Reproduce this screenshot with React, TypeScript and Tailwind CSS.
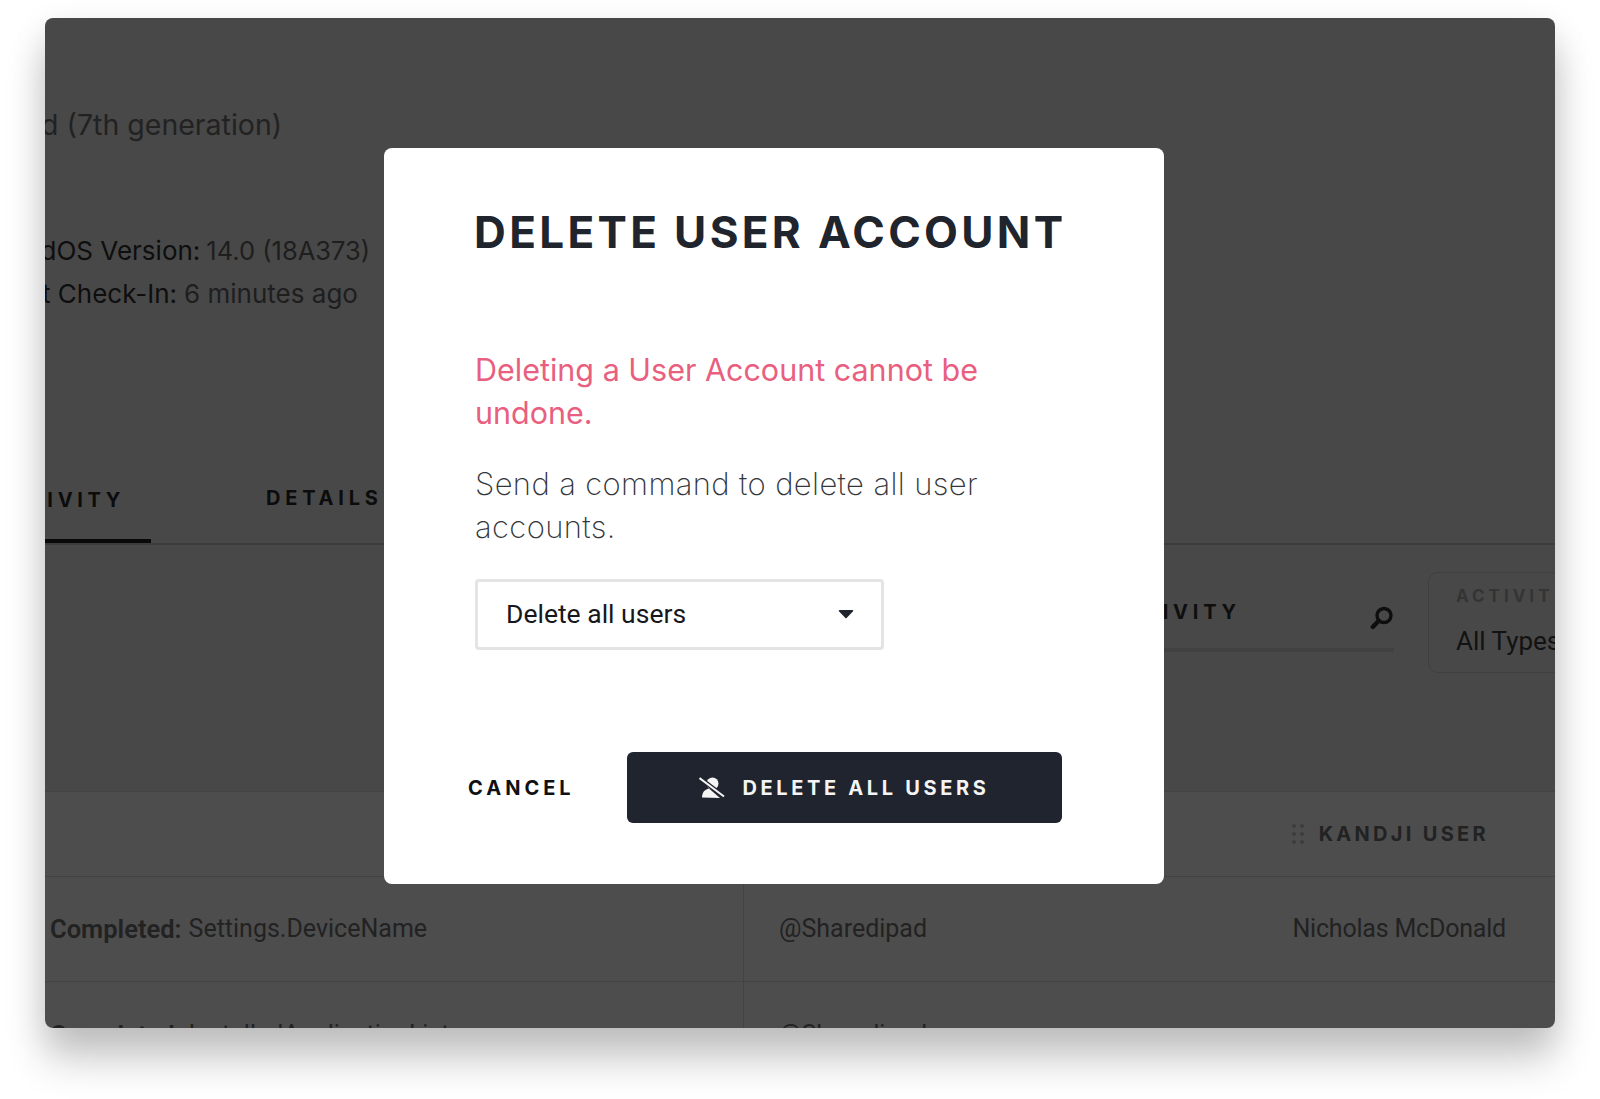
import React from "react";

const sans = "font-['Inter','Liberation_Sans',sans-serif]";
const narrow = "font-['Roboto','Liberation_Sans',sans-serif]";

function UserOff() {
  return (
    <svg width="26" height="21" viewBox="0 0 26 21" className="shrink-0">
      <circle cx="13.5" cy="6.5" r="6" fill="#f4f4f4" />
      <path d="M3 20.500c0-5 2.500-8 7-9l11 9.500z" fill="#f4f4f4" />
      <path d="M.5 1 25 19.500" stroke="#20242e" strokeWidth="4.500" fill="none" />
      <path d="M.5 1 25 19.500" stroke="#f4f4f4" strokeWidth="2" fill="none" />
    </svg>
  );
}

function SearchMark() {
  return (
    <svg width="24" height="24" viewBox="0 0 24 24" className="shrink-0">
      <circle cx="14" cy="9.500" r="7" stroke="#0e0e0e" strokeWidth="3.400" fill="none" />
      <path d="M8.500 15 2.800 21" stroke="#0e0e0e" strokeWidth="4.400" strokeLinecap="round" fill="none" />
    </svg>
  );
}

function Background() {
  return (
    <div className={`flex h-full flex-col ${sans}`}>
      <section className="relative h-[527px] shrink-0 border-b-[2px] border-[#3c3c3c] bg-[#484848]">
        <div className="ml-[-45px] pt-[86px] text-[28.5px] leading-[42px] text-[#222222]">iPad (7th generation)</div>
        <div className="ml-[-42px] mt-[83px] flex text-[26px] leading-[43px]">
          <span className="text-[#0e0e0e]">iPadOS Version:</span>
          <span className="ml-[6px] text-[25.5px] text-[#1e1e1e]">14.0 (18A373)</span>
        </div>
        <div className="ml-[-46px] flex text-[26px] leading-[43px]">
          <span className="text-[#0e0e0e]">Last Check-In:</span>
          <span className="ml-[7px] text-[#1e1e1e]">6 minutes ago</span>
        </div>
        <div className="absolute bottom-0 left-0 flex h-[68px] items-start">
          <div className="ml-[-54px] flex h-[68px] w-[160px] items-center justify-start border-b-[4px] border-[#090909] pb-[14px] text-[20px] font-bold tracking-[4.7px] text-[#0c0c0c]">
            ACTIVITY
          </div>
          <div className="ml-[115px] flex h-[46px] items-center text-[20px] font-bold tracking-[4.8px] text-[#0c0c0c]">DETAILS</div>
        </div>
      </section>

      <section className="flex h-[247px] shrink-0 justify-end border-b border-[#434343] bg-[#484848]">
        <div className="mt-[27px] flex h-[80px] w-[260px] items-start justify-between border-b-[4px] border-[#414141]">
          <span className="ml-[-28px] mt-[25px] text-[20px] font-bold tracking-[4.8px] text-[#0e0e0e]">ACTIVITY</span>
          <span className="mt-[34px]"><SearchMark /></span>
        </div>
        <div className="ml-[34px] mr-[-100px] mt-[27px] h-[101px] w-[227px] rounded-[10px] border border-[#3f3f3f] pl-[27px] pt-[12px]">
          <div className="text-[17px] font-bold leading-[22px] tracking-[4px] text-[#343434]">ACTIVITY</div>
          <div className={`mt-[17px] text-[26px] leading-[34px] text-[#121212] ${narrow}`}>All Types</div>
        </div>
      </section>

      <section className="flex-1 bg-[#4d4d4d]">
        <div className="flex h-[85px] items-center justify-end border-b border-[#434343] pr-[66px]">
          <svg width="14" height="22" viewBox="0 0 14 22" className="mr-[14px]">
            {[3, 11, 19].map((y) => (
              <g key={y} fill="#3d3d3d">
                <circle cx="3" cy={y} r="2" />
                <circle cx="11" cy={y} r="2" />
              </g>
            ))}
          </svg>
          <span className="text-[20px] font-bold tracking-[3.3px] text-[#222222]">KANDJI USER</span>
        </div>
        <div className={`flex h-[105px] border-b border-[#434343] text-[25px] text-[#222222] ${narrow}`}>
          <div className="flex w-[699px] items-center border-r border-[#434343] pl-[5px]">
            <b className="text-[25.5px] font-semibold">Completed:</b><span className="ml-[7px]">Settings.DeviceName</span>
          </div>
          <div className="flex flex-1 items-center justify-between pl-[35px] pr-[49px]">
            <span>@Sharedipad</span>
            <span className="tracking-[-0.2px]">Nicholas McDonald</span>
          </div>
        </div>
        <div className={`flex text-[25px] text-[#222222] ${narrow}`}>
          <div className="flex h-[100px] w-[699px] border-r border-[#434343] pl-[5px] pt-[34px]">
            <b className="text-[25.5px] font-semibold">Completed:</b><span className="ml-[7px]">InstalledApplicationList</span>
          </div>
          <div className="pl-[35px] pt-[34px]">@Sharedipad</div>
        </div>
      </section>
    </div>
  );
}

function Modal() {
  return (
    <div className={`absolute left-[339px] top-[130px] h-[736px] w-[780px] rounded-[8px] bg-white pl-[91px] pt-[60px] ${sans}`}>
      <h1 className="ml-[-1px] text-[44px] font-bold leading-[48px] tracking-[3.35px] text-[#20242c]">DELETE USER ACCOUNT</h1>
      <p className="mt-[92px] w-[570px] text-[30.5px] leading-[43px] text-[#e85f80]">Deleting a User Account cannot be undone.</p>
      <p className="mt-[28px] w-[540px] text-[31px] font-extralight leading-[43px] tracking-[0.36px] text-[#33363b]">Send a command to delete all user accounts.</p>
      <div className="mt-[31px] flex h-[71px] w-[409px] items-center justify-between rounded-[4px] border-[3px] border-[#e4e4e4] pb-[1px] pl-[28px] pr-[27px] text-[#16181d]">
        <span className={`text-[26.5px] ${narrow}`}>Delete all users</span>
        <svg width="16" height="10" viewBox="0 0 16 10">
          <path d="M1.500 1h13a.8.8 0 0 1 .6 1.300L8.600 9a.8.8 0 0 1-1.200 0L.9 2.300A.8.8 0 0 1 1.500 1z" fill="#20242c" />
        </svg>
      </div>
      <div className="mt-[102px] flex items-center">
        <button className="ml-[-7px] w-[159px] text-left text-[20px] font-bold tracking-[4px] text-[#101114]">CANCEL</button>
        <button className="flex h-[71px] w-[435px] items-center justify-center gap-[17px] rounded-[6px] bg-[#20242e] text-[20px] font-bold tracking-[3.65px] text-[#f4f4f4]">
          <UserOff />
          DELETE ALL USERS
        </button>
      </div>
    </div>
  );
}

export default function App() {
  return (
    <div className="h-[1099px] w-[1600px] overflow-hidden bg-white pl-[45px] pt-[18px]">
      <div className="relative h-[1010px] w-[1510px] overflow-hidden rounded-[8px] shadow-[0_32px_40px_rgba(0,0,0,0.2),0_10px_34px_rgba(0,0,0,0.1)]">
        <Background />
        <Modal />
      </div>
    </div>
  );
}
